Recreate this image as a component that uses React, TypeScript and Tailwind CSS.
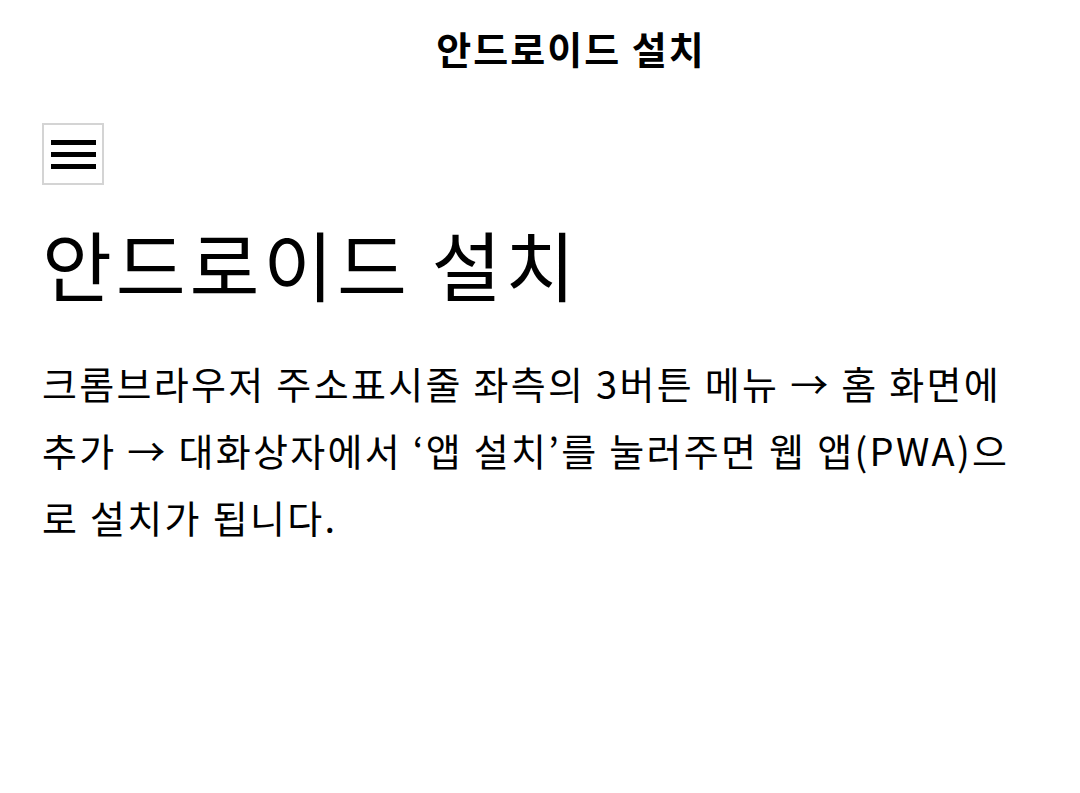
import React from "react";

export default function App() {
  const font = { fontFamily: '"Noto Sans CJK KR", "Noto Sans", sans-serif' };
  return (
    <div className="min-h-[793px] w-[1080px] bg-white text-black" style={font}>
      <header className="flex h-[95px] items-center justify-center pl-[62px]">
        <div className="text-[38px] font-bold leading-none tracking-[2px]">안드로이드 설치</div>
      </header>
      <main className="pl-[42px] pr-[60px]">
        <button className="mt-[28px] flex h-[62px] w-[62px] flex-col items-center justify-center gap-[7px] border-2 border-[#d4d4d4] bg-white">
          <span className="block h-[5px] w-[45px] bg-black" />
          <span className="block h-[5px] w-[45px] bg-black" />
          <span className="block h-[5px] w-[45px] bg-black" />
        </button>
        <h1 className="mt-[40px] text-[76px] font-normal leading-none tracking-[3.8px]">안드로이드 설치</h1>
        <p className="mt-[48px] text-[38px] leading-[67px] tracking-[2.3px]">
          크롬브라우저 주소표시줄 좌측의 3버튼 메뉴 → 홈 화면에 추가 → 대화상자에서 ‘앱 설치’를 눌러주면 웹 앱(PWA)으로 설치가 됩니다.
        </p>
      </main>
    </div>
  );
}
